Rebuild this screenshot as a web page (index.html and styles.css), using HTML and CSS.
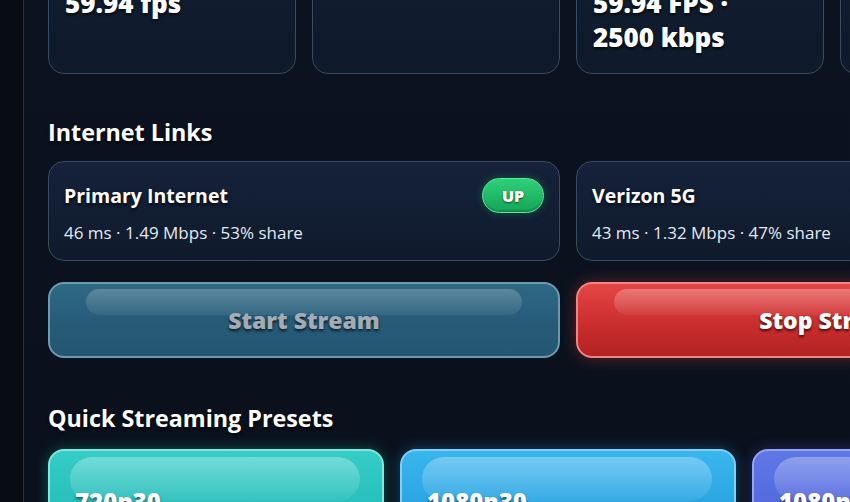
FILE: index.html
```html
<!DOCTYPE html>
<html lang="en">
<head>
<meta charset="utf-8">
<title>Stream Control</title>
<link rel="stylesheet" href="styles.css">
</head>
<body>
<div class="app">
  <aside class="rail"></aside>
  <main class="main">
    <section class="stats">
      <div class="stat-card">
        <div class="stat-label">Frame Rate</div>
        <div class="stat-value">59.94 fps</div>
      </div>
      <div class="stat-card">
        <div class="stat-label">Encoder</div>
        <div class="stat-value small">x264</div>
      </div>
      <div class="stat-card">
        <div class="stat-label">Output</div>
        <div class="stat-value">59.94 FPS · 2500&nbsp;kbps</div>
      </div>
      <div class="stat-card">
        <div class="stat-label">Uptime</div>
        <div class="stat-value">00:00:00</div>
      </div>
    </section>

    <h2 class="section-title">Internet Links</h2>
    <section class="links">
      <div class="link-card">
        <div class="link-head">
          <span class="link-name">Primary Internet</span>
          <span class="pill">UP</span>
        </div>
        <div class="link-meta">46 ms · 1.49 Mbps · 53% share</div>
      </div>
      <div class="link-card">
        <div class="link-head">
          <span class="link-name">Verizon 5G</span>
          <span class="pill">UP</span>
        </div>
        <div class="link-meta">43 ms · 1.32 Mbps · 47% share</div>
      </div>
    </section>

    <section class="actions">
      <button class="btn btn-start" disabled><span>Start Stream</span></button>
      <button class="btn btn-stop"><span>Stop Stream</span></button>
    </section>

    <h2 class="section-title presets-title">Quick Streaming Presets</h2>
    <section class="presets">
      <button class="preset preset-teal"><span>720p30</span></button>
      <button class="preset preset-blue"><span>1080p30</span></button>
      <button class="preset preset-indigo"><span>1080p60</span></button>
    </section>
  </main>
</div>
</body>
</html>
```

FILE: styles.css
```css
* { box-sizing: border-box; }

html, body {
  margin: 0;
  padding: 0;
  height: 100%;
  overflow: hidden;
}

body {
  background: #0a101a;
  color: #ffffff;
  font-family: "Open Sans", "Noto Sans", "Liberation Sans", sans-serif;
}

.app {
  display: flex;
  min-height: 100%;
  width: 1200px;
}

.rail {
  width: 24px;
  flex: 0 0 24px;
  background: #080c13;
  border-right: 1px solid #273142;
}

.main {
  flex: 0 0 auto;
  width: 1088px;
  padding: 0 24px;
  margin-top: -57px;
  background: linear-gradient(180deg, #0c1320 0%, #0a111c 100%);
}

/* top stats */
.stats {
  display: grid;
  grid-template-columns: repeat(4, 248px);
  gap: 16px;
}

.stat-card {
  border: 1px solid #3a4a60;
  border-radius: 16px;
  background: linear-gradient(180deg, #121d30 0%, #0f1a2b 100%);
  padding: 18px 16px 19px;
}

.stat-label {
  font-size: 13px;
  line-height: 20px;
  color: #9aa8ba;
  margin-bottom: 4px;
}

.stat-value {
  font-size: 26px;
  line-height: 34px;
  font-weight: 800;
  text-shadow: 0 2px 3px rgba(0,0,0,0.7);
}

.stat-value.small {
  font-size: 10px;
  line-height: 8px;
}

.section-title {
  font-size: 23.3px;
  line-height: 32px;
  font-weight: 700;
  margin: 42px 0 13px;
  text-shadow: 0 2px 3px rgba(0,0,0,0.7);
}

/* links */
.links {
  display: grid;
  grid-template-columns: repeat(2, 512px);
  gap: 16px;
}

.link-card {
  border: 1px solid #3a4a60;
  border-radius: 16px;
  background: linear-gradient(180deg, #15223a 0%, #0f1a2c 100%);
  padding: 16px 15px 15px 15px;
}

.link-head {
  display: flex;
  align-items: center;
  justify-content: space-between;
  height: 35px;
}

.link-name {
  font-size: 19.5px;
  font-weight: 700;
  text-shadow: 0 2px 3px rgba(0,0,0,0.7);
}

.pill {
  display: inline-flex;
  align-items: center;
  justify-content: center;
  width: 62px;
  height: 35px;
  border-radius: 18px;
  background: linear-gradient(180deg, #2fd07a 0%, #14a557 100%);
  border: 1px solid #5fe59c;
  box-shadow: 0 0 8px rgba(34,197,94,0.35), inset 0 -2px 0 rgba(0,0,0,0.15);
  font-size: 16px;
  font-weight: 800;
  text-shadow: 0 1px 2px rgba(0,0,0,0.6);
}

.link-meta {
  margin-top: 8px;
  font-size: 17px;
  line-height: 24px;
  color: #e4e9f0;
}

/* actions */
.actions {
  display: grid;
  grid-template-columns: repeat(2, 512px);
  gap: 16px;
  margin-top: 21px;
}

.btn {
  position: relative;
  height: 76px;
  border-radius: 16px;
  font-family: inherit;
  font-size: 23px;
  font-weight: 800;
  display: flex;
  align-items: center;
  justify-content: center;
  padding: 0;
  overflow: hidden;
}

.btn::before,
.preset::before {
  content: "";
  position: absolute;
  left: 36px;
  right: 36px;
  top: 5px;
  height: 26px;
  border-radius: 14px;
  background: linear-gradient(180deg, rgba(255,255,255,0.22) 0%, rgba(255,255,255,0.06) 100%);
}

.btn span,
.preset span { position: relative; }

.btn-start {
  background: linear-gradient(180deg, #2f6986 0%, #265b78 55%, #245672 100%);
  border: 2px solid #6a9cad;
  color: #a3abb4;
  text-shadow: 0 2px 3px rgba(0,0,0,0.7);
}

.btn-stop {
  background: linear-gradient(180deg, #e54646 0%, #cd3030 50%, #b32222 100%);
  border: 2px solid #f38484;
  color: #ffffff;
  text-shadow: 0 2px 3px rgba(0,0,0,0.7);
  box-shadow: 0 0 16px rgba(239,68,68,0.35);
  overflow: visible;
}

.btn-stop::before {
  background: linear-gradient(180deg, rgba(255,255,255,0.28) 0%, rgba(255,255,255,0.06) 100%);
}

.presets-title {
  margin: 44px 0 15px;
}

/* presets */
.presets {
  display: grid;
  grid-template-columns: repeat(3, 336px);
  gap: 16px;
}

.preset {
  position: relative;
  height: 96px;
  border-radius: 16px;
  font-family: inherit;
  font-size: 24px;
  font-weight: 800;
  color: #ffffff;
  text-shadow: 0 2px 3px rgba(0,0,0,0.5);
  text-align: left;
  padding: 10px 25px 0;
  display: block;
}

.preset span {
  display: block;
  line-height: 32px;
}

.preset::before {
  left: 20px;
  right: 22px;
  top: 6px;
  height: 44px;
  border-radius: 22px;
  background: linear-gradient(180deg, rgba(255,255,255,0.3) 0%, rgba(255,255,255,0.06) 100%);
}

.preset-teal {
  background: linear-gradient(180deg, #35cdc6 0%, #1fb3b3 100%);
  border: 2px solid #7be9df;
  box-shadow: 0 0 14px rgba(45,212,191,0.3);
}

.preset-blue {
  background: linear-gradient(180deg, #3ab6ee 0%, #1e98da 100%);
  border: 2px solid #7fd0f6;
  box-shadow: 0 0 14px rgba(56,189,248,0.3);
}

.preset-indigo {
  background: linear-gradient(180deg, #5f78e6 0%, #4c60d8 100%);
  border: 2px solid #94a6f3;
  box-shadow: 0 0 14px rgba(99,102,241,0.3);
}
```
